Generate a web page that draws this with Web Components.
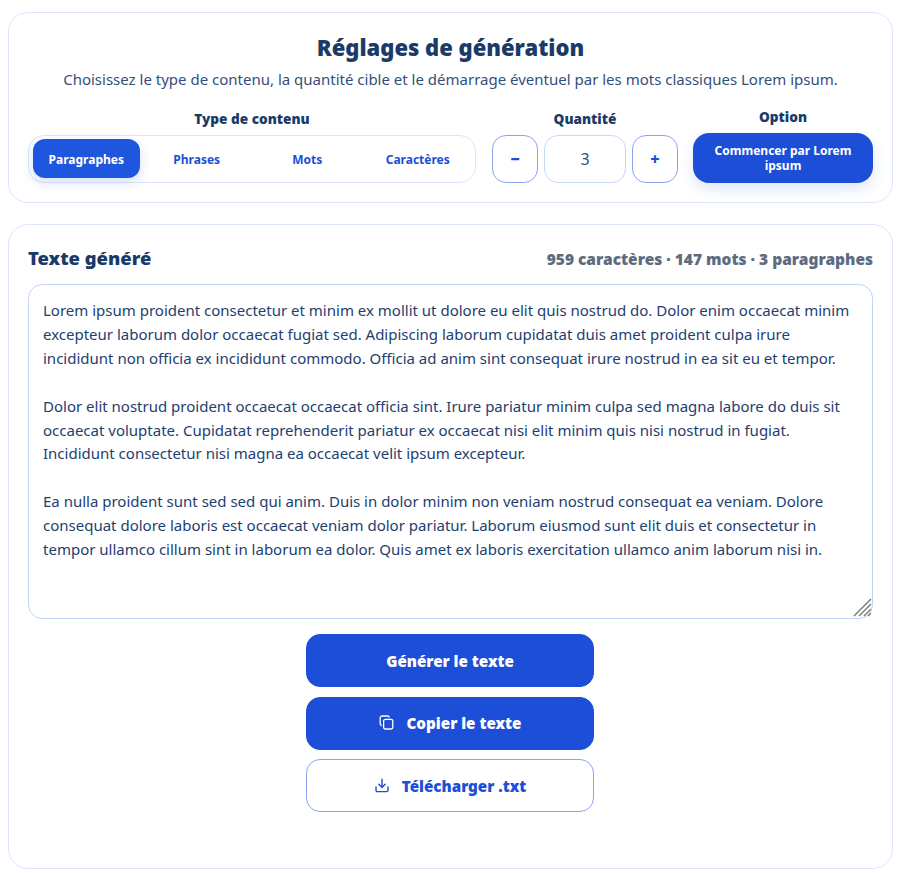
<!DOCTYPE html>
<html lang="fr">
<head>
<meta charset="UTF-8">
<title>Générateur de Lorem ipsum</title>
<style>
  html, body { margin: 0; background: #fff; }
  body { font-family: "Noto Sans", "Liberation Sans", sans-serif; color: #1e3a5f; }
</style>
</head>
<body>
<lorem-app></lorem-app>

<template id="lorem-card-tpl">
  <style>
    :host {
      display: block;
      box-sizing: border-box;
      background: #fff;
      border: 1px solid #dbe6fe;
      border-radius: 20px;
    }
  </style>
  <slot></slot>
</template>

<template id="lorem-btn-tpl">
  <style>
    :host { display: block; }
    button {
      box-sizing: border-box;
      width: 100%;
      height: 53px;
      display: flex;
      align-items: center;
      justify-content: center;
      gap: 12px;
      border-radius: 14px;
      border: 1px solid #1d4ed8;
      background: #1d4ed8;
      color: #fff;
      font: 900 15.2px "Noto Sans", "Liberation Sans", sans-serif;
      padding: 0;
    }
    :host([outline]) button {
      background: #fff;
      color: #1d4ed8;
      border-color: #86a4ee;
    }
    ::slotted(svg) { width: 16px; height: 16px; flex: none; }
  </style>
  <button type="button"><slot></slot></button>
</template>

<template id="content-tabs-tpl">
  <style>
    :host {
      display: grid;
      grid-template-columns: repeat(4, 1fr);
      gap: 4px;
      box-sizing: border-box;
      height: 48px;
      padding: 3px 4px;
      border: 1px solid #dbe6fe;
      border-radius: 16px;
      background: #fff;
    }
    button {
      border: 0;
      background: transparent;
      color: #1d4ed8;
      font: 700 12px "Noto Sans", "Liberation Sans", sans-serif;
      border-radius: 12px;
      height: 39px;
      padding: 1px 0 0;
    }
    button.on {
      background: #1f56e0;
      color: #fff;
      box-shadow: 0 4px 12px rgba(29, 78, 216, .18);
    }
  </style>
  <button type="button" class="on">Paragraphes</button>
  <button type="button">Phrases</button>
  <button type="button">Mots</button>
  <button type="button">Caractères</button>
</template>

<template id="qty-stepper-tpl">
  <style>
    :host { display: flex; gap: 6px; }
    button, .val {
      box-sizing: border-box;
      height: 48px;
      border-radius: 14px;
      background: #fff;
      display: flex;
      align-items: center;
      justify-content: center;
    }
    button {
      width: 46px;
      padding: 0;
      border: 1px solid #86a4ee;
      color: #1d4ed8;
      font: 900 16px "Noto Sans", "Liberation Sans", sans-serif;
    }
    .val {
      width: 82px;
      border: 1px solid #c7d7fb;
      color: #33507a;
      font: 400 16px "Noto Sans", "Liberation Sans", sans-serif;
    }
  </style>
  <button type="button">−</button>
  <div class="val">3</div>
  <button type="button">+</button>
</template>

<template id="settings-panel-tpl">
  <style>
    :host { display: block; }
    lorem-card { padding: 19px 19px 0; height: 191px; }
    h2 {
      margin: 0;
      text-align: center;
      font-size: 22px;
      line-height: 30px;
      font-weight: 900;
      color: #1a3a68;
    }
    p {
      margin: 7px 0 0;
      text-align: center;
      font-size: 15px;
      line-height: 20px;
      color: #33507a;
    }
    .row { display: flex; align-items: flex-end; margin-top: 19px; }
    .field { display: flex; flex-direction: column; align-items: stretch; }
    .lbl {
      text-align: center;
      font-size: 13.6px;
      line-height: 18px;
      font-weight: 900;
      color: #1a3a68;
      margin-bottom: 7px;
    }
    .tabs { width: 448px; margin-right: 16px; }
    .qty { margin-right: 15px; }
    .opt { width: 180px; }
    .start {
      box-sizing: border-box;
      width: 100%;
      height: 50px;
      border: 0;
      border-radius: 16px;
      background: #1d4ed8;
      color: #fff;
      font: 700 12px/15px "Noto Sans", "Liberation Sans", sans-serif;
      padding: 0 16px;
      box-shadow: 0 6px 14px rgba(29, 78, 216, .14);
    }
  </style>
  <lorem-card>
    <h2>Réglages de génération</h2>
    <p>Choisissez le type de contenu, la quantité cible et le démarrage éventuel par les mots classiques Lorem ipsum.</p>
    <div class="row">
      <div class="field tabs">
        <div class="lbl">Type de contenu</div>
        <content-tabs></content-tabs>
      </div>
      <div class="field qty">
        <div class="lbl">Quantité</div>
        <qty-stepper></qty-stepper>
      </div>
      <div class="field opt">
        <div class="lbl">Option</div>
        <button type="button" class="start">Commencer par Lorem ipsum</button>
      </div>
    </div>
  </lorem-card>
</template>

<template id="output-panel-tpl">
  <style>
    :host { display: block; }
    lorem-card { padding: 18px 19px 0; height: 645px; }
    .head {
      display: flex;
      justify-content: space-between;
      align-items: center;
      height: 30px;
      margin-bottom: 11px;
    }
    h3 { margin: 0 0 2px; font-size: 18.4px; font-weight: 900; color: #1a3a68; }
    .stats { font-size: 15.5px; font-weight: 900; color: #5d6b80; margin-top: 1px; }
    .box { position: relative; }
    textarea {
      display: block;
      box-sizing: border-box;
      width: 100%;
      height: 335px;
      margin: 0;
      padding: 14px 14px 13px;
      border: 1px solid #c2d3fa;
      border-radius: 14px;
      outline: 0;
      background: #fff;
      color: #1e4070;
      font: 400 15px/23.9px "Noto Sans", "Liberation Sans", sans-serif;
      resize: none;
    }
    /* poignée de redimensionnement, par-dessus le coin du champ */
    .grip { position: absolute; right: 1px; bottom: 2px; width: 19px; height: 19px; }
    .actions {
      display: flex;
      flex-direction: column;
      gap: 9.6px;
      width: 288px;
      margin: 15px 0 0 278px;
    }
  </style>
  <lorem-card>
    <div class="head">
      <h3>Texte généré</h3>
      <div class="stats">959 caractères · 147 mots · 3 paragraphes</div>
    </div>
    <div class="box">
      <textarea spellcheck="false">Lorem ipsum proident consectetur et minim ex mollit ut dolore eu elit quis nostrud do. Dolor enim occaecat minim excepteur laborum dolor occaecat fugiat sed. Adipiscing laborum cupidatat duis amet proident culpa irure incididunt non officia ex incididunt commodo. Officia ad anim sint consequat irure nostrud in ea sit eu et tempor.

Dolor elit nostrud proident occaecat occaecat officia sint. Irure pariatur minim culpa sed magna labore do duis sit occaecat voluptate. Cupidatat reprehenderit pariatur ex occaecat nisi elit minim quis nisi nostrud in fugiat. Incididunt consectetur nisi magna ea occaecat velit ipsum excepteur.

Ea nulla proident sunt sed sed qui anim. Duis in dolor minim non veniam nostrud consequat ea veniam. Dolore consequat dolore laboris est occaecat veniam dolor pariatur. Laborum eiusmod sunt elit duis et consectetur in tempor ullamco cillum sint in laborum ea dolor. Quis amet ex laboris exercitation ullamco anim laborum nisi in.</textarea>
      <svg class="grip" viewBox="0 0 19 19" stroke="#777" stroke-width="1.4" fill="none">
        <path d="M1 18 18 1M6 18 18 6M11 18l7-7M15 18l3-3"/>
      </svg>
    </div>
    <div class="actions">
      <lorem-btn>Générer le texte</lorem-btn>
      <lorem-btn>
        <svg viewBox="0 0 16 16" fill="none" stroke="currentColor" stroke-width="1.3" stroke-linejoin="round">
          <rect x="4.6" y="4.4" width="9.2" height="9.6" rx="1.8"/>
          <path d="M2.8 10.6A1.8 1.8 0 0 1 1.2 8.8V3a2 2 0 0 1 2-2h5.4a1.8 1.8 0 0 1 1.7 1.5"/>
        </svg>
        <span>Copier le texte</span>
      </lorem-btn>
      <lorem-btn outline>
        <svg viewBox="0 0 16 16" fill="none" stroke="currentColor" stroke-width="1.4" stroke-linecap="round" stroke-linejoin="round">
          <path d="M8 1.2v8M4.9 6.3 8 9.4l3.1-3.1"/>
          <path d="M2 9v3.2a1.4 1.4 0 0 0 1.4 1.4h9.2a1.4 1.4 0 0 0 1.4-1.4V9"/>
        </svg>
        <span>Télécharger .txt</span>
      </lorem-btn>
    </div>
  </lorem-card>
</template>

<template id="lorem-app-tpl">
  <style>
    :host {
      display: flex;
      flex-direction: column;
      gap: 21px;
      box-sizing: border-box;
      width: 900px;
      padding: 12px 7px 0 8px;
    }
  </style>
  <settings-panel></settings-panel>
  <output-panel></output-panel>
</template>

<script>
  // chaque balise : un shadow root cloné depuis son template
  function define(tag, tplId) {
    customElements.define(tag, class extends HTMLElement {
      connectedCallback() {
        if (this.shadowRoot) return;
        this.attachShadow({ mode: 'open' });
        this.shadowRoot.appendChild(document.getElementById(tplId).content.cloneNode(true));
      }
    });
  }
  define('lorem-card', 'lorem-card-tpl');
  define('lorem-btn', 'lorem-btn-tpl');
  define('content-tabs', 'content-tabs-tpl');
  define('qty-stepper', 'qty-stepper-tpl');
  define('settings-panel', 'settings-panel-tpl');
  define('output-panel', 'output-panel-tpl');
  define('lorem-app', 'lorem-app-tpl');
</script>
</body>
</html>
